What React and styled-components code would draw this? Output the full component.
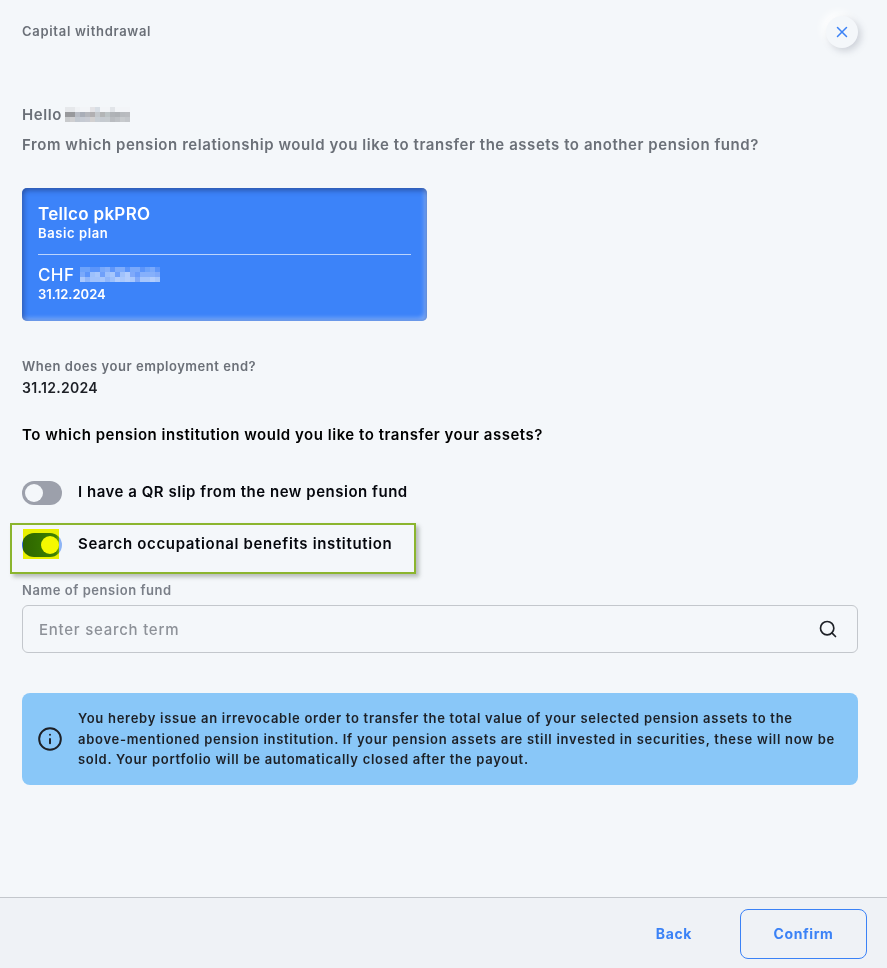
import React from 'react'
import styled, { createGlobalStyle } from 'styled-components'
import { X, Search, Info } from 'lucide-react'

const GlobalStyle = createGlobalStyle`
  html, body {
    margin: 0;
    padding: 0;
    background: #f4f7fa;
  }
  * {
    box-sizing: border-box;
  }
`

const Page = styled.div`
  width: 887px;
  height: 968px;
  display: flex;
  flex-direction: column;
  font-family: Inter, "Noto Sans", sans-serif;
  overflow: hidden;
`

const Main = styled.main`
  flex: 1;
  padding: 16px 29px 0 22px;
  display: flex;
  flex-direction: column;
`

const Header = styled.header`
  display: flex;
  justify-content: space-between;
  align-items: center;
  height: 32px;
`

const PageTitle = styled.h1`
  margin: 0 0 2px;
  font-size: 13px;
  font-weight: 600;
  letter-spacing: 0.7px;
  color: #6b7078;
`

const CloseButton = styled.button`
  width: 32px;
  height: 32px;
  padding: 0;
  border: 0;
  border-radius: 50%;
  background: #f4f7fa;
  color: #3b82f6;
  display: flex;
  align-items: center;
  justify-content: center;
  box-shadow: 3px 3px 7px rgba(90, 100, 120, 0.25), -4px -4px 8px #fff;
`

const Lead = styled.p`
  margin: ${props => props.$top}px 0 0;
  font-size: 15px;
  line-height: 20px;
  font-weight: 600;
  letter-spacing: 0.555px;
  color: #6b7078;
  display: flex;
  align-items: center;
  gap: 3px;
`

const Mosaic = styled.span`
  display: inline-grid;
  grid-template-columns: repeat(${props => props.$cols}, 5px);
  grid-auto-rows: 5px;
  margin-bottom: 1px;
`

const Card = styled.div`
  margin-top: 33px;
  width: 405px;
  height: 133px;
  padding: 16px;
  border-radius: 5px;
  background: #3c83f9;
  color: #fff;
  box-shadow: inset 0 3px 5px rgba(30, 50, 110, 0.45), inset 3px 0 4px rgba(30, 50, 110, 0.22),
    inset -3px -3px 4px rgba(255, 255, 255, 0.35);
`

const CardTitle = styled.div`
  font-size: 17px;
  line-height: 20px;
  font-weight: 600;
  letter-spacing: 0.3px;
`

const CardSub = styled.div`
  margin-top: 0;
  font-size: 13px;
  line-height: 18px;
  font-weight: 600;
  letter-spacing: ${props => props.$spacing || 0}px;
`

const CardRule = styled.hr`
  margin: 12px 0 10px;
  border: 0;
  border-top: 1px solid rgba(255, 255, 255, 0.65);
`

const CardAmount = styled.div`
  font-size: 17px;
  line-height: 20px;
  font-weight: 500;
  letter-spacing: 0.4px;
  display: flex;
  align-items: center;
  gap: 6px;
`

const Small = styled.div`
  margin-top: ${props => props.$top}px;
  font-size: 13px;
  line-height: 18px;
  font-weight: 600;
  letter-spacing: 0.53px;
  color: #6b7078;
`

const Value = styled.div`
  margin-top: 4px;
  font-size: 14px;
  line-height: 18px;
  font-weight: 600;
  letter-spacing: 0.3px;
  color: #1d2026;
`

const Question = styled.div`
  margin-top: 28px;
  font-size: 15px;
  line-height: 20px;
  font-weight: 600;
  letter-spacing: 0.52px;
  color: #000;
`

const Row = styled.div`
  display: flex;
  align-items: center;
  gap: 16px;
`

const Toggle = styled.span`
  position: relative;
  flex: none;
  width: 40px;
  height: 24px;
  display: block;
`

const Track = styled.span`
  display: block;
  width: 100%;
  height: 100%;
  border-radius: 12px;
  background: ${props =>
    props.$on ? 'linear-gradient(90deg, #2f66e0 0, #3776ea 45%, #4285f5 85%, #8db4f5 94%)' : '#9ca0ab'};
`

const Thumb = styled.span`
  position: absolute;
  top: 3px;
  left: ${props => (props.$on ? '19px' : '3px')};
  width: 18px;
  height: 18px;
  border-radius: 50%;
  background: ${props => (props.$on ? '#fff' : '#f4f7fa')};
`

// browser text marker over the switch, it tints what lies under it
const Marker = styled.span`
  position: absolute;
  left: 1px;
  top: -4px;
  width: 36px;
  height: 30px;
  background: #f5f900;
  mix-blend-mode: multiply;
`

const ToggleLabel = styled.span`
  margin-bottom: 2px;
  font-size: 15px;
  line-height: 20px;
  font-weight: 600;
  letter-spacing: ${props => props.$spacing}px;
  color: #05070d;
`

const Highlight = styled.div`
  position: relative;
  margin: 18px 0 0 -12px;
  width: 406px;
  height: 51px;
  padding: 8px 10px;
  border: 2px solid #8bb52e;
  box-shadow: 3px 3px 4px rgba(70, 80, 70, 0.35);
`

const FirstRow = styled(Row)`
  margin-top: 36px;
`

const FieldLabel = styled(Small)`
  letter-spacing: 0.55px;
  color: #7a7f88;
`

const SearchBox = styled.div`
  margin-top: 6px;
  height: 48px;
  padding: 0 19px 0 16px;
  border: 1px solid #c3c7cc;
  border-radius: 6px;
  display: flex;
  align-items: center;
  justify-content: space-between;
  color: #1d2026;
`

const SearchInput = styled.input`
  flex: 1;
  border: 0;
  outline: 0;
  background: transparent;
  padding: 0;
  font: 500 15px Inter, sans-serif;
  letter-spacing: 0.75px;
  &::placeholder {
    color: #8d9198;
    opacity: 1;
  }
`

const Notice = styled.div`
  margin-top: 40px;
  height: 92px;
  padding: 0 22px 0 15px;
  border-radius: 8px;
  background: #89c7f8;
  color: #1d2026;
  display: flex;
  align-items: center;
  gap: 15px;
`

const NoticeIcon = styled(Info)`
  flex: none;
`

const NoticeText = styled.p`
  margin: 0;
  font-size: 13px;
  line-height: 20.5px;
  font-weight: 600;
  letter-spacing: 0.72px;
`

const Footer = styled.footer`
  height: 71px;
  flex: none;
  border-top: 1px solid #c3c7cc;
  background: #eff2f6;
  padding: 11px 20px 0 0;
  display: flex;
  justify-content: flex-end;
  gap: 48px;
`

const TextButton = styled.button`
  border: 0;
  padding: 0 0 2px;
  background: none;
  height: 50px;
  color: #3b82f6;
  font: 700 14px Inter, sans-serif;
  letter-spacing: 0.6px;
`

const OutlineButton = styled(TextButton)`
  width: 127px;
  border: 1px solid #3b82f6;
  border-radius: 8px;
`

const nameShades = [
  '#e6e8eb', '#e6e8eb', '#f0f2f5', '#f3f5f8', '#f3f5f8', '#e4e3e6', '#d8dee5', '#f3f5f8', '#f3f5f8', '#e2e5e9', '#f3f5f8', '#f3f5f8', '#f3f5f8',
  '#98999c', '#98999c', '#b8bcc4', '#a9aeb8', '#b4b6bc', '#b2b0b2', '#c4c8cc', '#b3b5b6', '#bcc3c5', '#b0b3b7', '#aeb1b5', '#b7babe', '#b9bbbf',
  '#c8cacc', '#cfcfd1', '#c2c8d0', '#c5cad3', '#c8cbd3', '#d2d0d0', '#c8ced4', '#c5cad0', '#c6cbcf', '#b9bcc0', '#bec1c5', '#c7cacd', '#c3c6ca',
]

const amountShades = [
  '#6da3fb', '#6da3fb', '#5c95fa', '#5c95fa', '#79a9fb', '#84affb', '#5f96fa', '#80adfb', '#80adfb', '#5c95fa', '#7aa9fb', '#7aa9fb', '#5c95fa', '#6da3fb', '#7aa9fb', '#5c95fa',
  '#7aa9fb', '#5c95fa', '#9cc0fc', '#a6c6fc', '#6fa0fa', '#9cc0fc', '#a6c6fc', '#6fa0fa', '#a0c2fc', '#b2cdfd', '#7fa9fa', '#6a9cfa', '#86b0fb', '#86b0fb', '#86b0fb', '#7fa9fa',
  '#a9c8fd', '#8fb6fb', '#a0c2fc', '#a0c2fc', '#a6c6fc', '#8fb6fb', '#9cc0fc', '#b2cdfd', '#a9c8fd', '#b2cdfd', '#a9c8fd', '#7fa9fa', '#a6c6fc', '#a6c6fc', '#b2cdfd', '#a6c6fc',
]

const Pixels = ({ shades, cols }) => (
  <Mosaic $cols={cols}>
    {shades.map((shade, i) => (
      <span key={i} style={{ background: shade }} />
    ))}
  </Mosaic>
)

export default function App() {
  return (
    <Page>
      <GlobalStyle />
      <Main>
        <Header>
          <PageTitle>Capital withdrawal</PageTitle>
          <CloseButton aria-label="Close">
            <X size={18} strokeWidth={2} />
          </CloseButton>
        </Header>
        <Lead $top={57}>
          Hello <Pixels shades={nameShades} cols={13} />
        </Lead>
        <Lead $top={10}>From which pension relationship would you like to transfer the assets to another pension fund?</Lead>
        <Card>
          <CardTitle>Tellco pkPRO</CardTitle>
          <CardSub $spacing={0.6}>Basic plan</CardSub>
          <CardRule />
          <CardAmount>
            CHF <Pixels shades={amountShades} cols={16} />
          </CardAmount>
          <CardSub>31.12.2024</CardSub>
        </Card>
        <Small $top={36}>When does your employment end?</Small>
        <Value>31.12.2024</Value>
        <Question>To which pension institution would you like to transfer your assets?</Question>
        <FirstRow>
          <Toggle>
            <Track />
            <Thumb />
          </Toggle>
          <ToggleLabel $spacing={0.52}>I have a QR slip from the new pension fund</ToggleLabel>
        </FirstRow>
        <Highlight>
          <Row>
            <Toggle>
              <Track $on />
              <Thumb $on />
              <Marker />
            </Toggle>
            <ToggleLabel $spacing={0.65}>Search occupational benefits institution</ToggleLabel>
          </Row>
        </Highlight>
        <FieldLabel $top={7}>Name of pension fund</FieldLabel>
        <SearchBox>
          <SearchInput placeholder="Enter search term" />
          <Search size={20} strokeWidth={2} />
        </SearchBox>
        <Notice>
          <NoticeIcon size={26} strokeWidth={1.8} />
          <NoticeText>
            You hereby issue an irrevocable order to transfer the total value of your selected pension assets to the
            <br />
            above-mentioned pension institution. If your pension assets are still invested in securities, these will now
            be sold. Your portfolio will be automatically closed after the payout.
          </NoticeText>
        </Notice>
      </Main>
      <Footer>
        <TextButton>Back</TextButton>
        <OutlineButton>Confirm</OutlineButton>
      </Footer>
    </Page>
  )
}
